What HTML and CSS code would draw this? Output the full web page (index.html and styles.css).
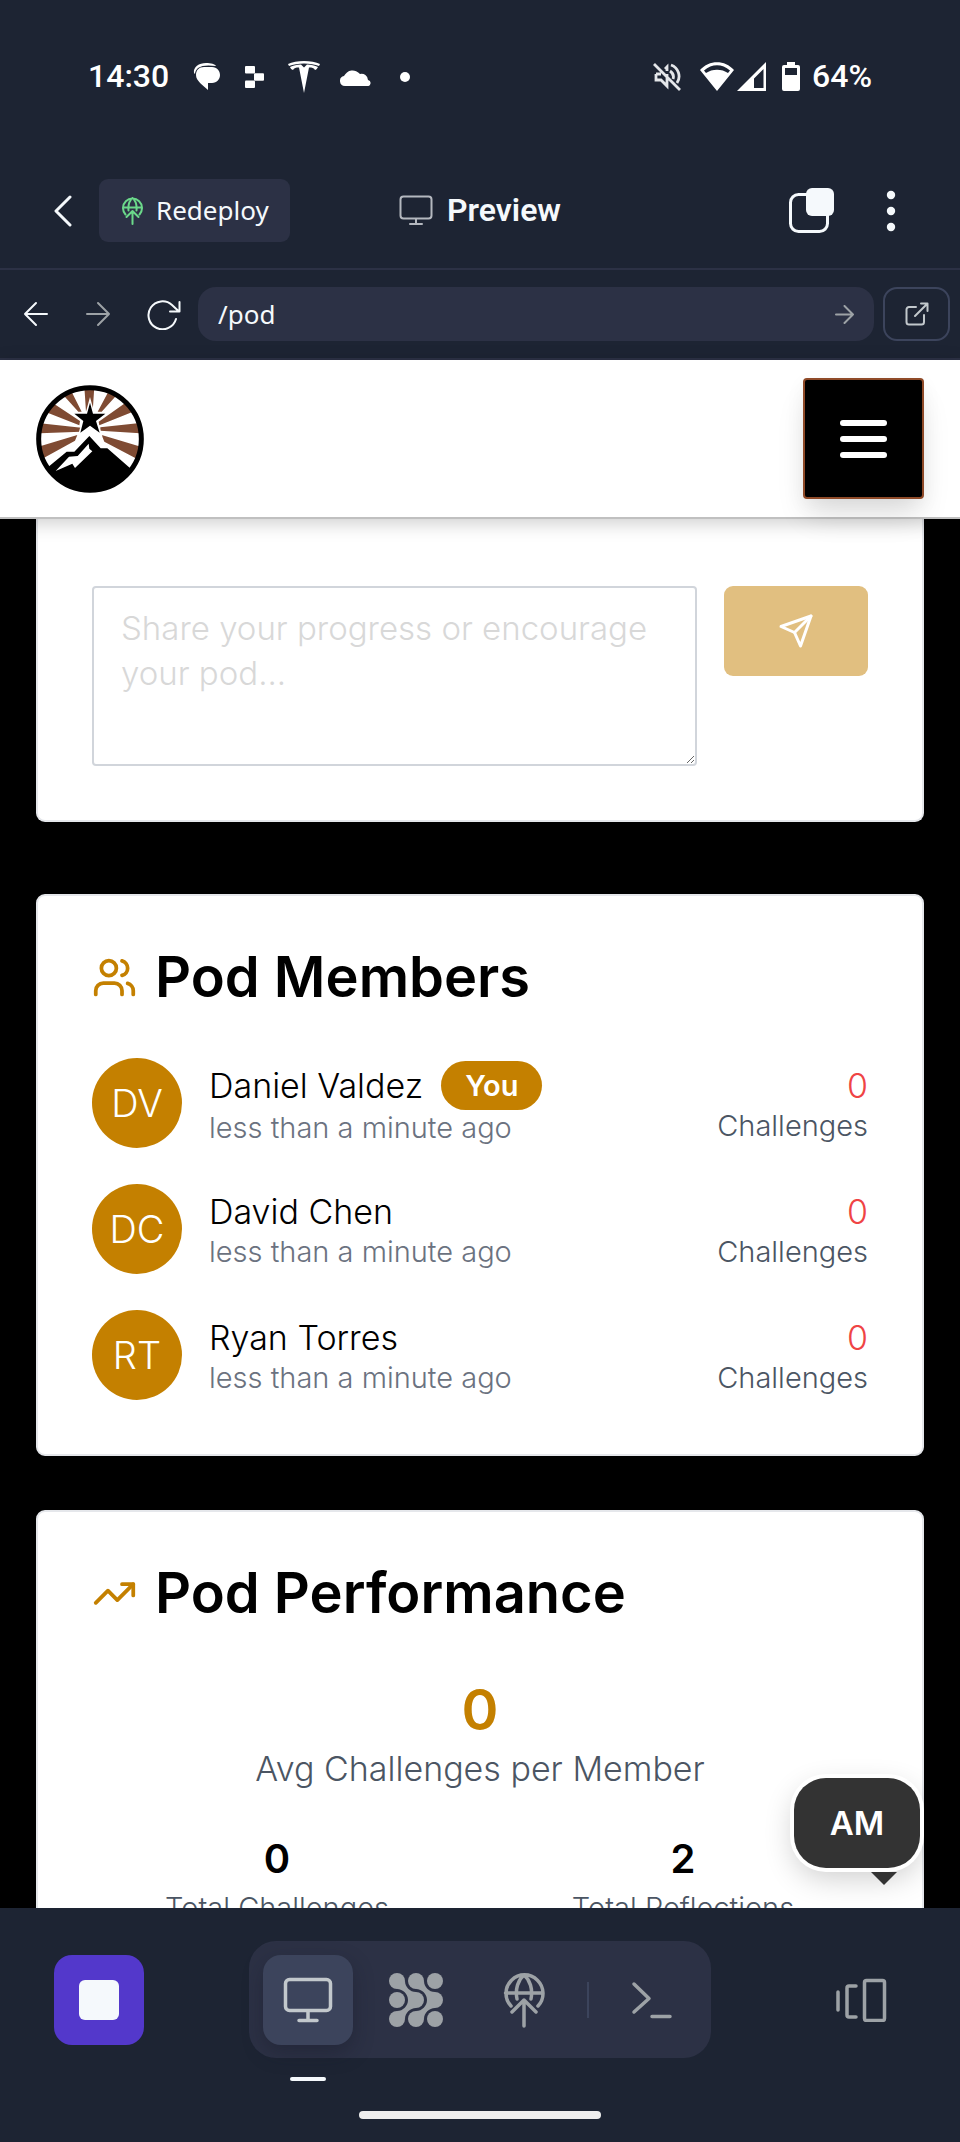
FILE: index.html
```html
<!DOCTYPE html>
<html lang="en">
<head>
<meta charset="utf-8">
<meta name="viewport" content="width=device-width, initial-scale=1">
<title>Preview</title>
<link rel="stylesheet" href="styles.css">
</head>
<body>
<div class="status-bar">
  <div class="status-group">
    <span class="status-text">14:30</span>
    <svg class="i-chat" width="28" height="28" viewBox="0 0 28 28" fill="#fff"><path d="M1 10C0 4 6 0 13 0c5 0 9 1 10 3C16 2 9 2 5 5c-2 2-3 4-3 6z"/><path d="M11 4h8c5 0 8 4 8 8s-3 8-8 8h-4v7C10 22 3 18 3 12c0-5 3-8 8-8z"/></svg>
    <svg class="i-blocks" width="19" height="22" viewBox="0 0 19 22" fill="#fff"><rect width="10" height="7.400" rx="1"/><rect x="9" y="7.300" width="10" height="7.400" rx="1"/><rect y="14.600" width="10" height="7.400" rx="1"/></svg>
    <svg class="i-tesla" width="32" height="32" viewBox="0 0 32 32" fill="#fff"><path d="M0 3C8-1 24-1 32 3l-1 2C23 1.500 9 1.500 1 5z"/><path d="M2 6c3-1.500 7-2.400 11-2.500l3 3 3-3c4 .1 8 1 11 2.500-1 2-2 3-3 3-1-2-3-2.500-6-2.500L16 32 11 6.500C8 6.500 6 7 5 9 3.500 8.500 2.500 7.500 2 6z"/></svg>
    <svg class="i-cloud" width="32" height="18" viewBox="0 0 32 18" fill="#fff"><path d="M5 18a5 5 0 0 1-1-9.900A9.500 9.500 0 0 1 20 6a6.500 6.500 0 0 1 8 6 3 3 0 0 1-1 6z"/></svg>
    <span class="status-dot"></span>
  </div>
  <div class="status-group status-right">
    <svg class="i-mute" width="28" height="28" viewBox="0 0 28 28" fill="none" stroke="#e4e6ea" stroke-width="2.800"><path d="M1 1l26 26M3 11v6h5l6 6V11M3 11h5M18 2a12 12 0 0 1 6 18M17 8c3 2 4 5 3 8M12 6l2-2v4"/></svg>
    <svg width="34" height="29" viewBox="0 0 34 29" fill="#fff"><path fill-rule="evenodd" d="M0 8C9-2.500 25-2.500 34 8L17 29zM4 8.500l2 2.500c6-4.500 16-4.500 22 0l2-2.500C22 1.500 12 1.500 4 8.500z"/></svg>
    <svg class="i-signal" width="29" height="29" viewBox="0 0 29 29" fill="#fff"><path fill-rule="evenodd" d="M29 0v29H0zM26.500 7L17 16.500V26h9.500z"/></svg>
    <svg class="i-battery" width="18" height="29" viewBox="0 0 18 29" fill="#fff"><path fill-rule="evenodd" d="M5 0h8v3h3a2 2 0 0 1 2 2v22a2 2 0 0 1-2 2H2a2 2 0 0 1-2-2V5a2 2 0 0 1 2-2h3zM3 6v7h12V6z"/></svg>
    <span class="status-text">64%</span>
  </div>
</div>

<header class="app-header">
  <div class="header-side">
    <button class="bare" aria-label="Back"><svg width="18" height="32" viewBox="0 0 18 32" fill="none" stroke="#f5f9fc" stroke-width="3" stroke-linecap="round" stroke-linejoin="round"><path d="M16 2L2 16l14 14"/></svg></button>
    <button class="redeploy"><svg width="21" height="28" viewBox="0 0 42 56" fill="none" stroke="#6bd98a" stroke-width="4" stroke-linecap="round" stroke-linejoin="round"><path d="M7 35A19 19 0 1 1 35 35M2 21h38M13 27C12 16 15 7 21 2c6 5 9 14 8 25M21 54V28M9 40l12-12 12 12"/></svg>Redeploy</button>
  </div>
  <h1 class="header-title"><svg width="34" height="31" viewBox="0 0 34 31" fill="none" stroke="#b4b8bf" stroke-width="2" stroke-linecap="round"><rect x="1.500" y="1.500" width="31" height="22" rx="3"/><path d="M17 24v5M11 29h12"/></svg>Preview</h1>
  <div class="header-side header-end">
    <button class="bare" aria-label="Tabs"><svg width="45" height="45" viewBox="0 0 45 45"><rect x="1.500" y="6.500" width="37" height="37" rx="8" fill="none" stroke="#f5f9fc" stroke-width="3"/><rect x="17" y="0" width="28" height="28" rx="6" fill="#f5f9fc"/></svg></button>
    <button class="bare" aria-label="More"><svg width="10" height="42" viewBox="0 0 10 42" fill="#f5f9fc"><circle cx="5" cy="5" r="4.200"/><circle cx="5" cy="21" r="4.200"/><circle cx="5" cy="37" r="4.200"/></svg></button>
  </div>
</header>

<div class="url-row">
  <div class="url-nav">
    <button class="bare" aria-label="Go back"><svg width="26" height="26" viewBox="0 0 26 26" fill="none" stroke="#f5f9fc" stroke-width="2" stroke-linecap="round" stroke-linejoin="round"><path d="M24 13H2M13 2L2 13l11 11"/></svg></button>
    <button class="bare" aria-label="Go forward"><svg width="26" height="26" viewBox="0 0 26 26" fill="none" stroke="#9da2a6" stroke-width="2" stroke-linecap="round" stroke-linejoin="round"><path d="M2 13h22M13 2l11 11-11 11"/></svg></button>
    <button class="bare" aria-label="Reload"><svg width="34" height="31" viewBox="0 0 34 31" fill="none" stroke="#f5f9fc" stroke-width="2" stroke-linecap="round" stroke-linejoin="round"><path d="M29 20A14 14 0 1 1 25 6l7 6.500M32.500 3v9.500H23"/></svg></button>
  </div>
  <div class="url-field">
    <input type="text" value="/pod" aria-label="Path">
    <button class="bare" aria-label="Go"><svg width="19" height="19" viewBox="0 0 19 19" fill="none" stroke="#9da2a6" stroke-width="2" stroke-linecap="round" stroke-linejoin="round"><path d="M1 9.500h17M9.500 1L18 9.500 9.500 18"/></svg></button>
  </div>
  <button class="open-external" aria-label="Open in new tab"><svg width="24" height="24" viewBox="0 0 24 24" fill="none" stroke="#c2c8cc" stroke-width="2" stroke-linecap="round" stroke-linejoin="round"><path d="M11 5H4a2.500 2.500 0 0 0-2.500 2.500V20A2.500 2.500 0 0 0 4 22.500h12.500A2.500 2.500 0 0 0 19 20v-7M16 1.500h6.500V9M22 2L10 14"/></svg></button>
</div>

<nav class="site-nav">
  <a href="#" aria-label="Home"><svg class="logo" viewBox="48 45 324 324">
    <defs><clipPath id="disc"><circle cx="210" cy="207" r="150"/></clipPath></defs>
    <circle cx="210" cy="207" r="154" fill="#fff"/>
    <g clip-path="url(#disc)">
      <path fill="#7f4b33" d="M193 50h30l-5 75h-20zM127 72l24-14 34 67h-10zM269 58l24 14-48 53h-12zM75 125l20-28 85 56-2 13zM319 97l20 28-101 41-2-11zM55 159v31l127-5 2-12zM362 159v31l-121-8v-10zM55 230l12 36 98-54 7-17zM362 230l-12 36-97-51-8-20z"/>
      <path fill="#000" stroke="#fff" stroke-width="9" paint-order="stroke" stroke-linejoin="miter" stroke-miterlimit="8" d="M210 98l9 33h37l-28 22 11 35-29-21-29 21 9-35-27-22h38z"/>
      <path fill="#fff" d="M209 170l55 61 66 64v20H80v-14z"/>
      <path fill="#000" d="M208 198l34 37h20l72 63v80H70v-75l70-58h23z"/>
    </g>
    <path fill="#fff" d="M206 221l2 15 9 8-52 50-8-13-50 22 40-43 26-2z"/>
    <circle cx="210" cy="207" r="154" fill="none" stroke="#000" stroke-width="15"/>
  </svg></a>
  <button class="menu-button" aria-label="Menu"><span></span><span></span><span></span></button>
</nav>

<main class="page">
  <section class="card compose">
    <form class="compose-form">
      <textarea placeholder="Share your progress or encourage your pod..." aria-label="Message"></textarea>
      <button type="button" class="send" aria-label="Send"><svg width="36" height="36" viewBox="0 0 24 24" fill="none" stroke="#fff" stroke-width="2" stroke-linecap="round" stroke-linejoin="round"><path d="m22 2-7 20-4-9-9-4Z"/><path d="M22 2 11 13"/></svg></button>
    </form>
  </section>

  <section class="card">
    <h2><svg width="45" height="45" viewBox="0 0 24 24" fill="none" stroke="#c48000" stroke-width="2" stroke-linecap="round" stroke-linejoin="round"><path d="M16 21v-2a4 4 0 0 0-4-4H6a4 4 0 0 0-4 4v2"/><circle cx="9" cy="7" r="4"/><path d="M22 21v-2a4 4 0 0 0-3-3.870M16 3.130a4 4 0 0 1 0 7.750"/></svg>Pod Members</h2>
    <ul class="members">
      <li>
        <span class="avatar">DV</span>
        <div class="who"><div class="name">Daniel Valdez <span class="badge">You</span></div><div class="seen">less than a minute ago</div></div>
        <div class="score"><div class="count">0</div><div class="unit">Challenges</div></div>
      </li>
      <li>
        <span class="avatar">DC</span>
        <div class="who"><div class="name">David Chen</div><div class="seen">less than a minute ago</div></div>
        <div class="score"><div class="count">0</div><div class="unit">Challenges</div></div>
      </li>
      <li>
        <span class="avatar">RT</span>
        <div class="who"><div class="name">Ryan Torres</div><div class="seen">less than a minute ago</div></div>
        <div class="score"><div class="count">0</div><div class="unit">Challenges</div></div>
      </li>
    </ul>
  </section>

  <section class="card">
    <h2><svg width="45" height="45" viewBox="0 0 24 24" fill="none" stroke="#c48000" stroke-width="2" stroke-linecap="round" stroke-linejoin="round"><path d="M22 7l-8.500 8.500-5-5L2 17"/><path d="M16 7h6v6"/></svg>Pod Performance</h2>
    <div class="average"><div class="average-value">0</div><div class="average-label">Avg Challenges per Member</div></div>
    <div class="totals">
      <div><div class="total-value">0</div><div class="unit">Total Challenges</div></div>
      <div><div class="total-value">2</div><div class="unit">Total Reflections</div></div>
    </div>
  </section>

  <button class="assistant">AM</button>
</main>

<footer class="dock">
  <div class="dock-row">
    <button class="stop" aria-label="Stop"><span></span></button>
    <div class="tabs">
      <button class="tab active" aria-label="Preview"><svg width="50" height="46" viewBox="0 0 50 46" fill="none" stroke="#c2c8cc" stroke-width="3.500" stroke-linecap="round"><rect x="2.500" y="2.500" width="45" height="31" rx="4"/><path d="M25 34v9M16 43.500h18"/></svg></button>
      <button class="tab" aria-label="Agent"><svg width="54" height="54" viewBox="0 0 54 54" fill="#9da2a6"><circle cx="8" cy="8" r="8"/><circle cx="27" cy="8" r="8"/><circle cx="46" cy="8" r="8"/><circle cx="8" cy="27" r="8"/><circle cx="27" cy="27" r="8"/><circle cx="46" cy="27" r="8"/><circle cx="8" cy="46" r="8"/><circle cx="27" cy="46" r="8"/><circle cx="46" cy="46" r="8"/><path d="M16 8c0 6 5 11 11 11v16c-6 0-11 5-11 11l-8-8c6 0 11-5 11-11S14 16 8 16zM35 8c0 6 5 11 11 11v16c-6 0-11 5-11 11l-8-8c6 0 11-5 11-11s-5-11-11-11z"/></svg></button>
      <button class="tab" aria-label="Deployments"><svg width="42" height="56" viewBox="0 0 42 56" fill="none" stroke="#9da2a6" stroke-width="3.500" stroke-linecap="round" stroke-linejoin="round"><path d="M8 34A18.500 18.500 0 1 1 35 34M2.500 21h37M14 27C12 17 15 8 21 3c6 5 9 14 7 24M21 54V28M9 40l12-12 12 12"/></svg></button>
      <span class="divider"></span>
      <button class="tab" aria-label="Shell"><svg width="42" height="38" viewBox="0 0 42 38" fill="none" stroke="#9da2a6" stroke-width="3.500" stroke-linecap="round" stroke-linejoin="round"><path d="M3 3l15 14.500L3 31M21 35.500h18"/></svg></button>
    </div>
    <button class="switcher" aria-label="All tabs"><svg width="52" height="44" viewBox="0 0 52 44" fill="none" stroke="#9da2a6" stroke-width="3.500" stroke-linecap="round" stroke-linejoin="round"><path d="M3 14v18M21 8h-7a2 2 0 0 0-2 2v27a2 2 0 0 0 2 2h7"/><rect x="29.500" y="2.500" width="20" height="40" rx="2"/></svg></button>
  </div>
  <div class="home-bar"></div>
</footer>
</body>
</html>
```
FILE: styles.css
```css
* { box-sizing: border-box; }
body {
  margin: 0;
  height: 100vh;
  display: flex;
  flex-direction: column;
  overflow: hidden;
  background: #1d2433;
  color: #000;
  font-family: Inter, "Open Sans", sans-serif;
  font-size: 34px;
  line-height: 45px;
}
button, input, textarea { font: inherit; color: inherit; }
button { border: 0; padding: 0; background: none; display: flex; align-items: center; justify-content: center; }
svg { display: block; flex: none; }
h1, h2, ul { margin: 0; padding: 0; font-weight: 600; }
ul { list-style: none; font-weight: 300; }

.status-bar {
  flex: none;
  height: 153px;
  padding: 0 88px;
  display: flex;
  align-items: center;
  justify-content: space-between;
  color: #fff;
}
.status-group { display: flex; align-items: center; gap: 24px; }
.status-text { font-family: Roboto, sans-serif; font-size: 32px; font-weight: 500; }
.status-dot { width: 10px; height: 10px; margin-left: 4px; border-radius: 50%; background: #fff; }
.i-cloud { margin-left: -4px; }
.status-right { gap: 0; }
.i-mute { margin-right: 19px; }
.i-signal { margin-left: 3px; }
.i-battery { margin: 0 12px 0 16px; }

.app-header {
  flex: none;
  height: 117px;
  padding: 0 54px;
  display: grid;
  grid-template-columns: 1fr auto 1fr;
  align-items: center;
  border-bottom: 2px solid #2c3145;
  color: #f5f9fc;
}
.header-side { display: flex; align-items: center; gap: 27px; }
.header-end { justify-content: flex-end; gap: 52px; padding-right: 10px; }
.header-title {
  display: flex;
  align-items: center;
  gap: 14px;
  font-family: Roboto, sans-serif;
  font-size: 32px;
  font-weight: 600;
}
.redeploy {
  height: 63px;
  padding: 0 21px 0 23px;
  gap: 13px;
  border-radius: 9px;
  background: #2c3145;
  font-family: "Noto Sans", sans-serif;
  font-size: 26px;
}

.url-row {
  flex: none;
  height: 90px;
  padding: 0 10px 0 23px;
  display: flex;
  align-items: center;
  gap: 9px;
  border-bottom: 2px solid #2c3145;
  color: #f5f9fc;
}
.url-nav { display: flex; align-items: center; gap: 36px; padding-right: 8px; }
.url-field {
  flex: 1;
  min-width: 0;
  height: 54px;
  padding: 0 20px;
  display: flex;
  align-items: center;
  border-radius: 18px;
  background: #2c3145;
}
.url-field input {
  flex: 1;
  min-width: 0;
  padding: 0;
  border: 0;
  background: none;
  font-family: "Noto Sans", sans-serif;
  font-size: 26px;
}
.open-external { width: 67px; height: 54px; border: 2px solid #3c445c; border-radius: 14px; }

.site-nav {
  flex: none;
  position: relative;
  z-index: 2;
  height: 159px;
  padding: 0 36px;
  display: flex;
  align-items: center;
  justify-content: space-between;
  background: #fff;
  border-bottom: 2px solid #c0c0c0;
  box-shadow: 0 4px 18px rgba(0, 0, 0, .2);
}
.logo { width: 108px; height: 108px; }
.menu-button {
  width: 121px;
  height: 121px;
  flex-direction: column;
  gap: 10px;
  border: 2px solid #8f4a28;
  border-radius: 4px;
  background: #000;
  box-shadow: 0 20px 30px -5px rgba(0, 0, 0, .12), 0 6px 20px rgba(0, 0, 0, .05);
}
.menu-button span { width: 47px; height: 6px; border-radius: 3px; background: #fff; }

.page {
  flex: 1;
  min-height: 0;
  position: relative;
  padding: 0 36px;
  overflow: hidden;
  background: #000;
}
.card {
  margin-bottom: 54px;
  padding: 54px;
  border: 2px solid #e5e7eb;
  border-radius: 9px;
  background: #fff;
}
.compose { margin-bottom: 72px; padding-top: 67px; border-top: 0; border-radius: 0 0 9px 9px; }
.compose-form { display: flex; align-items: flex-start; gap: 27px; }
.compose-form textarea {
  flex: 1;
  min-width: 0;
  height: 180px;
  padding: 18px 27px;
  border: 2px solid #d1d5db;
  border-radius: 4px;
  background: #fff;
  font-size: 33px;
  font-weight: 300;
}
.compose-form textarea::placeholder { color: #d8d8d8; }
.send { width: 144px; height: 90px; border-radius: 9px; background: #e1bf80; }

h2 { display: flex; align-items: center; gap: 18px; margin-bottom: 54px; font-size: 56px; line-height: 54px; }
.members { display: grid; gap: 36px; }
.members li { height: 90px; display: flex; align-items: center; gap: 27px; }
.avatar {
  flex: none;
  width: 90px;
  height: 90px;
  display: grid;
  place-items: center;
  border-radius: 50%;
  background: #c48000;
  color: #fff;
  font-size: 38px;
}
.who { flex: 1; }
.name { display: flex; align-items: center; gap: 18px; }
.badge {
  padding: 0 24px;
  border-radius: 25px;
  background: #c48000;
  color: #fff;
  font-size: 29px;
  font-weight: 600;
  line-height: 49px;
}
.seen { font-size: 29px; line-height: 36px; color: #6b7280; }
.score { text-align: right; }
.count { color: #ef4444; }
.unit { font-size: 29px; font-weight: 300; line-height: 36px; color: #4b5563; }

.average, .totals { text-align: center; }
.average { margin-bottom: 36px; font-weight: 300; color: #4b5563; }
.average-value { font-size: 56px; font-weight: 600; line-height: 72px; color: #c48000; }
.totals { display: grid; grid-template-columns: 1fr 1fr; gap: 36px; }
.total-value { font-size: 40px; font-weight: 600; line-height: 63px; }

.assistant {
  position: absolute;
  right: 40px;
  bottom: 40px;
  width: 126px;
  height: 90px;
  border-radius: 32px;
  background: #333;
  color: #fff;
  font-size: 33px;
  font-weight: 600;
  box-shadow: 0 0 0 4px #fff, 0 10px 30px rgba(0, 0, 0, .2);
}
.assistant::after {
  content: "";
  position: absolute;
  right: 23px;
  top: 94px;
  border: 13px solid transparent;
  border-top-color: #333;
  border-bottom: 0;
}

.dock { flex: none; padding: 33px 54px 23px; background: #1d2433; }
.dock-row { display: flex; align-items: center; justify-content: space-between; }
.stop { width: 90px; height: 90px; border-radius: 18px; background: #5338cb; }
.stop span { width: 40px; height: 40px; border-radius: 6px; background: #f5f9fc; }
.tabs {
  height: 117px;
  padding: 0 14px;
  display: flex;
  align-items: center;
  gap: 18px;
  border-radius: 27px;
  background: #2c3145;
}
.tab, .switcher { width: 90px; height: 90px; border-radius: 18px; }
.active { position: relative; background: #3c445c; box-shadow: 0 8px 20px rgba(20, 24, 38, .35); }
.active::after {
  content: "";
  position: absolute;
  top: 122px;
  width: 36px;
  height: 4px;
  border-radius: 2px;
  background: #f5f9fc;
}
.divider { width: 2px; height: 36px; background: #3c445c; }
.home-bar { width: 242px; height: 8px; margin: 53px auto 0; border-radius: 4px; background: #eee; }
```
